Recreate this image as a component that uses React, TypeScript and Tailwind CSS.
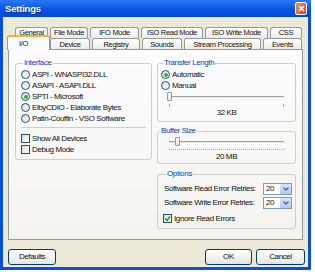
import React from 'react';

const row1: [string, number][] = [
  ['General', 33],
  ['File Mode', 38],
  ['IFO Mode', 49],
  ['ISO Read Mode', 62],
  ['ISO Write Mode', 63],
  ['CSS', 32],
];

const row2: [string, number][] = [
  ['Device', 40],
  ['Registry', 48],
  ['Sounds', 40],
  ['Stream Processing', 77],
  ['Events', 39],
];

function Tab({ label, width }: { label: string; width: number }) {
  return (
    <div
      style={{ width }}
      className="h-full flex items-center justify-center border border-b-0 border-[#919B9C] rounded-t-[3px] bg-gradient-to-b from-white to-[#ECEBE6]"
    >
      {label}
    </div>
  );
}

function Radio({ label, checked }: { label: string; checked?: boolean }) {
  return (
    <div className="flex items-center h-[11px] gap-[2px] whitespace-nowrap">
      <span className="w-[9px] h-[9px] rounded-full border border-[#1C5180] bg-gradient-to-br from-[#DCDCD7] to-white flex items-center justify-center shrink-0">
        {checked && <span className="w-[4px] h-[4px] rounded-full bg-[#2BB52B]" />}
      </span>
      <span>{label}</span>
    </div>
  );
}

function Check({ label, checked }: { label: string; checked?: boolean }) {
  return (
    <div className="flex items-center h-[11px] gap-[2px] whitespace-nowrap">
      <span className="w-[9px] h-[9px] border border-[#1C5180] bg-gradient-to-br from-[#DCDCD7] to-white flex items-center justify-center shrink-0">
        {checked && (
          <svg width="7" height="7" viewBox="0 0 7 7">
            <path d="M1 3.5 L3 5.5 L6 1.5" stroke="#21A121" strokeWidth="1.6" fill="none" />
          </svg>
        )}
      </span>
      <span>{label}</span>
    </div>
  );
}

function Group({
  title,
  className,
  children,
}: {
  title: string;
  className?: string;
  children: React.ReactNode;
}) {
  return (
    <fieldset className={`border border-[#D0D0BF] rounded-[3px] min-w-0 ${className ?? ''}`}>
      <legend className="ml-[2px] px-[1px] text-[#0046D5] leading-[10px]">{title}</legend>
      {children}
    </fieldset>
  );
}

function Slider({ pos, dotted }: { pos: number; dotted?: boolean }) {
  return (
    <div className="mx-[11px]">
      <div className="relative h-[10px] flex items-center">
        <div className="w-full h-[3px] border-t border-[#A5A59D] border-b border-b-white bg-[#E4E3DC]" />
        <div
          style={{ left: pos }}
          className="absolute top-0 w-[5px] h-[9px] rounded-[1px] border border-[#8D9EAD] bg-gradient-to-b from-white to-[#E6E6E0]"
        />
      </div>
      {dotted ? (
        <div className="mt-[2px] h-[1px] border-t border-dotted border-[#A5A59D]" />
      ) : (
        <div className="mt-[2px] flex justify-between h-[3px]">
          <span className="w-px h-full bg-[#A5A59D]" />
          <span className="w-px h-full bg-[#A5A59D]" />
        </div>
      )}
    </div>
  );
}

function Combo() {
  return (
    <div className="flex w-[29px] h-[12px] border border-[#7F9DB9] bg-white shrink-0">
      <span className="flex-1 pl-[2px] flex items-center">20</span>
      <span className="w-[11px] bg-gradient-to-b from-[#D8E4FC] to-[#B4C8F6] flex items-center justify-center">
        <svg width="6" height="4" viewBox="0 0 6 4">
          <path d="M0.5 0.5 L3 3 L5.5 0.5" stroke="#4D6185" strokeWidth="1.3" fill="none" />
        </svg>
      </span>
    </div>
  );
}

function Button({ label, width }: { label: string; width: number }) {
  return (
    <div
      style={{ width }}
      className="h-[16px] flex items-center justify-center border border-[#003C74] rounded-[3px] bg-gradient-to-b from-white to-[#E6E5DF]"
    >
      {label}
    </div>
  );
}

export default function App() {
  return (
    <div className="w-[315px] h-[272px] bg-white overflow-hidden font-['Liberation_Sans',Arial,sans-serif] text-[8px] leading-[10px] tracking-[-0.4px] text-[#111]">
      <div className="w-[311px] h-[270px] flex flex-col">
        <div className="h-[17px] flex items-center pl-[5px] pr-[4px] bg-gradient-to-b from-[#2C78F2] via-[#0A58E4] to-[#0048D4]">
          <span className="text-white font-bold text-[9.5px] tracking-[-0.2px] [text-shadow:1px_1px_0_#0A2A8A]">
            Settings
          </span>
          <span className="ml-auto w-[12px] h-[13px] rounded-[2px] border border-white bg-gradient-to-br from-[#F08B6A] to-[#D3401C] flex items-center justify-center">
            <svg width="7" height="7" viewBox="0 0 7 7">
              <path d="M1 1 L6 6 M6 1 L1 6" stroke="white" strokeWidth="1.6" />
            </svg>
          </span>
        </div>
        <div className="flex-1 flex flex-col bg-[#ECE9D8] border-l-[3px] border-r-[3px] border-b-[3px] border-[#0B4FD9]">
          <div className="mt-[10px] ml-[12px] h-[11px] flex gap-[2px] text-[7.5px] tracking-[-0.3px]">
            {row1.map(([label, w]) => (
              <Tab key={label} label={label} width={w} />
            ))}
          </div>
          <div className="ml-[4px] h-[12px] flex items-end text-[7.5px] tracking-[-0.3px]">
            <div className="relative z-10 w-[43px] h-[15px] flex items-center pl-[11px] pt-[1px] border border-b-0 border-[#919B9C] border-t-2 border-t-[#F3B23A] rounded-t-[3px] bg-[#FCFCFE]">
              I/O
            </div>
            <div className="h-full flex gap-[2px]">
              {row2.map(([label, w]) => (
                <Tab key={label} label={label} width={w} />
              ))}
            </div>
          </div>
          <div className="-mt-[1px] ml-[5px] w-[295px] h-[191px] border border-[#919B9C] bg-gradient-to-b from-[#FCFCFE] to-[#F4F3EE] flex gap-[5px] px-[6px] pt-[8px]">
            <Group title="Interface" className="w-[138px] h-[102px] px-[5px] pt-[1px]">
              <Radio label="ASPI - WNASPI32.DLL" />
              <Radio label="ASAPI - ASAPI.DLL" />
              <Radio label="SPTI - Microsoft" checked />
              <Radio label="ElbyCDIO - Elaborate Bytes" />
              <Radio label="Patin-Couffin - VSO Software" />
              <div className="mt-[3px] h-px bg-[#D0D0BF]" />
              <div className="mt-[5px]">
                <Check label="Show All Devices" />
                <Check label="Debug Mode" />
              </div>
            </Group>
            <div className="w-[140px] flex flex-col">
              <Group title="Transfer Length" className="h-[64px] px-[3px] pt-[1px]">
                <Radio label="Automatic" checked />
                <Radio label="Manual" />
                <div className="-mx-[3px] mt-[1px]">
                  <Slider pos={-2} />
                </div>
                <div className="text-center mt-[1px]">32 KB</div>
              </Group>
              <Group title="Buffer Size" className="mt-[4px] h-[38px] pt-[1px]">
                <Slider pos={6} dotted />
                <div className="text-center mt-[2px]">20 MB</div>
              </Group>
              <Group title="Options" className="mt-[5px] h-[60px] pl-[6px] pr-[3px] pt-[3px]">
                <div className="flex items-center justify-between h-[13px] whitespace-nowrap">
                  <span>Software Read Error Retries:</span>
                  <Combo />
                </div>
                <div className="mt-[1px] flex items-center justify-between h-[13px] whitespace-nowrap">
                  <span>Software Write Error Retries:</span>
                  <Combo />
                </div>
                <div className="mt-[4px] -ml-[1px]">
                  <Check label="Ignore Read Errors" checked />
                </div>
              </Group>
            </div>
          </div>
          <div className="mt-[9px] flex">
            <div className="ml-[5px]">
              <Button label="Defaults" width={48} />
            </div>
            <div className="ml-auto flex gap-[4px] mr-[3px]">
              <Button label="OK" width={47} />
              <Button label="Cancel" width={49} />
            </div>
          </div>
        </div>
      </div>
    </div>
  );
}
